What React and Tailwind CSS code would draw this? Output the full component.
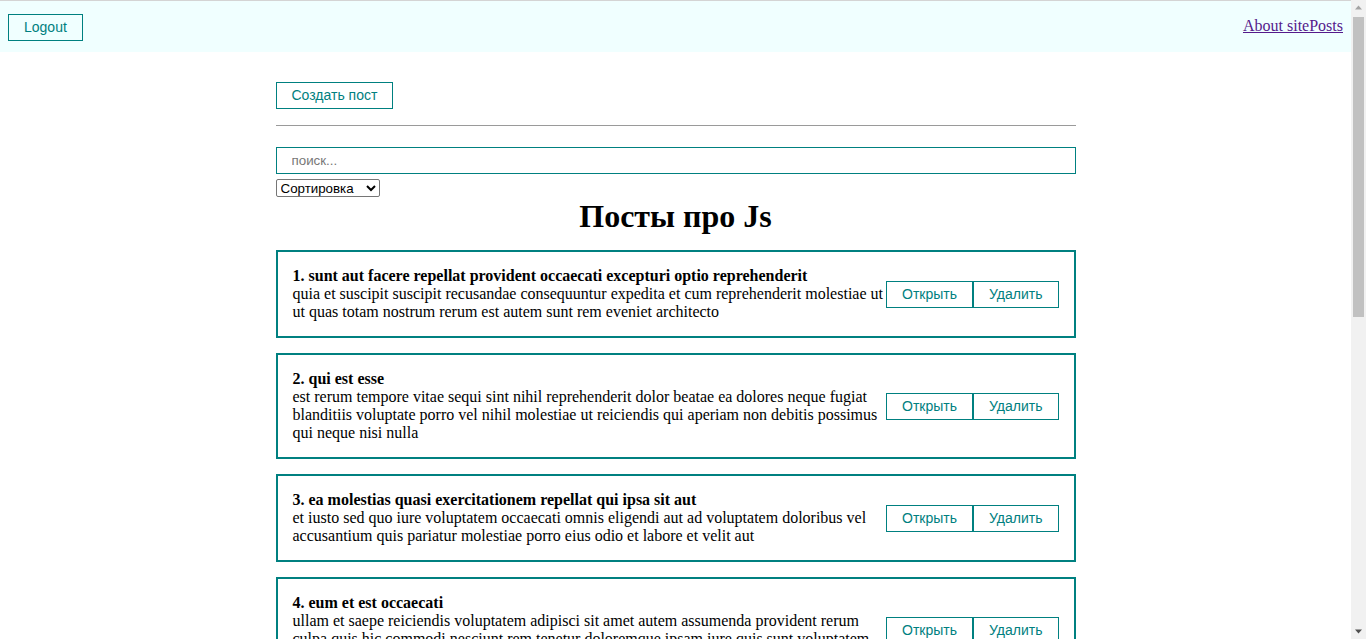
import React from 'react';

const posts = [
  {
    id: 1,
    title: 'sunt aut facere repellat provident occaecati excepturi optio reprehenderit',
    body: 'quia et suscipit suscipit recusandae consequuntur expedita et cum reprehenderit molestiae ut ut quas totam nostrum rerum est autem sunt rem eveniet architecto',
  },
  {
    id: 2,
    title: 'qui est esse',
    body: 'est rerum tempore vitae sequi sint nihil reprehenderit dolor beatae ea dolores neque fugiat blanditiis voluptate porro vel nihil molestiae ut reiciendis qui aperiam non debitis possimus qui neque nisi nulla',
  },
  {
    id: 3,
    title: 'ea molestias quasi exercitationem repellat qui ipsa sit aut',
    body: 'et iusto sed quo iure voluptatem occaecati omnis eligendi aut ad voluptatem doloribus vel accusantium quis pariatur molestiae porro eius odio et labore et velit aut',
  },
  {
    id: 4,
    title: 'eum et est occaecati',
    body: 'ullam et saepe reiciendis voluptatem adipisci sit amet autem assumenda provident rerum culpa quis hic commodi nesciunt rem tenetur doloremque ipsam iure quis sunt voluptatem rerum illo velit',
  },
  {
    id: 5,
    title: 'nesciunt quas odio',
    body: 'repudiandae veniam quaerat sunt sed alias aut fugiat sit autem sed est voluptatem omnis possimus esse voluptatibus quis est aut tenetur dolor neque',
  },
];

const btn =
  "border border-[#008080] text-[#008080] bg-transparent px-[15px] py-[4px] text-[14px] leading-[17px] font-['Liberation_Sans',Arial,sans-serif]";

const PostItem = ({ post }) => (
  <div className="flex items-center justify-between border-2 border-[#008080] p-[15px] mb-[15px]">
    <div>
      <strong>
        {post.id}. {post.title}
      </strong>
      <div>{post.body}</div>
    </div>
    <div className="flex shrink-0">
      <button className={btn}>Открыть</button>
      <button className={btn}>Удалить</button>
    </div>
  </div>
);

// window scrollbar as seen in the screenshot
const Scrollbar = () => (
  <div className="fixed top-0 right-0 h-screen w-[15px] bg-[#f1f1f1] flex flex-col items-center">
    <svg width="15" height="15" viewBox="0 0 15 15">
      <path d="M4 9.5 L7.5 5.5 L11 9.5 Z" fill="#a3a3a3" />
    </svg>
    <div className="w-[11px] h-[300px] mt-[2px] bg-[#c1c1c1]" />
    <div className="flex-1" />
    <svg width="15" height="15" viewBox="0 0 15 15">
      <path d="M4 5.5 L11 5.5 L7.5 9.5 Z" fill="#505050" />
    </svg>
  </div>
);

const App = () => {
  return (
    <div className="min-h-screen bg-white text-black font-['Liberation_Serif','Times_New_Roman',serif] text-[16px] leading-[normal] border-t border-[#d4d4d4] pr-[15px]">
      {/* Navbar */}
      <div className="flex items-start justify-between h-[51px] pt-[13px] px-[8px] bg-[#f0ffff]">
        <button className={btn}>Logout</button>
        <a href="#" className="mt-[3px] text-[#551a8b] underline">
          About sitePosts
        </a>
      </div>

      {/* Content */}
      <div className="w-[800px] mx-auto pt-[30px]">
        <button className={btn}>Создать пост</button>
        <hr className="mt-[16px] mb-[21px] border-0 border-t border-[#9a9a9a]" />

        <input
          placeholder="поиск..."
          className="w-full h-[27px] border border-[#008080] px-[15px] text-[13.33px] font-['Liberation_Sans',Arial,sans-serif] placeholder:text-[#777] outline-none"
        />
        <div className="mt-[5px] leading-none">
          <select className="h-[18px] w-[104px] border border-[#767676] rounded-[2px] text-[13.33px] leading-[16px] font-['Liberation_Sans',Arial,sans-serif]">
            <option>Сортировка</option>
            <option>По названию</option>
            <option>По описанию</option>
          </select>
        </div>

        <h1 className="mt-[1px] text-center text-[32px] font-bold leading-[37px] mb-[15px]">
          Посты про Js
        </h1>

        {posts.map((p) => (
          <PostItem key={p.id} post={p} />
        ))}
      </div>
      <Scrollbar />
    </div>
  );
};

export default App;
